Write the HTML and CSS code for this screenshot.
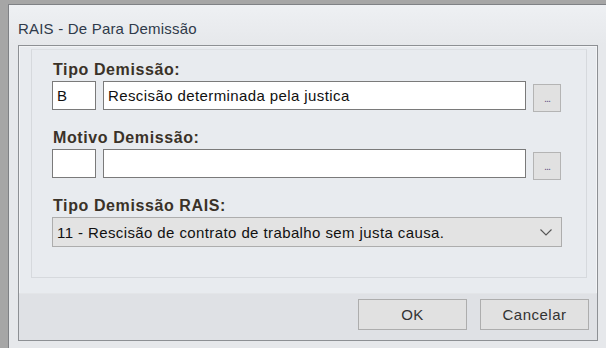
FILE: index.html
```html
<!DOCTYPE html>
<html lang="pt">
<head>
<meta charset="utf-8">
<title>RAIS - De Para Demissão</title>
<link rel="stylesheet" href="styles.css">
</head>
<body>
<div class="window">
  <div class="title">RAIS - De Para Demissão</div>
  <div class="panel">
    <div class="content">
      <div class="group">
        <div class="label">Tipo Demissão:</div>
        <div class="row">
          <div class="input code">B</div>
          <div class="input desc">Rescisão determinada pela justica</div>
          <div class="btn-dots">...</div>
        </div>
        <div class="label">Motivo Demissão:</div>
        <div class="row">
          <div class="input code"></div>
          <div class="input desc"></div>
          <div class="btn-dots">...</div>
        </div>
        <div class="label">Tipo Demissão RAIS:</div>
        <div class="select">
          <span>11 - Rescisão de contrato de trabalho sem justa causa.</span>
          <svg class="chev" width="12" height="7" viewBox="0 0 12 7"><path d="M0.5 0.5 L6 6 L11.5 0.5" fill="none" stroke="#555" stroke-width="1.1"/></svg>
        </div>
      </div>
    </div>
    <div class="footer">
      <div class="btn">OK</div>
      <div class="btn">Cancelar</div>
    </div>
  </div>
</div>
</body>
</html>
```

FILE: styles.css
```css
html, body {
  margin: 0;
  padding: 0;
}
body {
  background: #a6a6a6;
  width: 606px;
  height: 348px;
  overflow: hidden;
  font-family: "Liberation Sans", Arial, sans-serif;
}
.window {
  margin: 4px 0 0 8px;
  height: 344px;
  border-top: 1px solid #7f8185;
  border-left: 1px solid #7f8185;
  background: linear-gradient(#eef0f3, #e6e8eb 40px, #e6e8eb);
  box-sizing: border-box;
  padding: 0 8px 0 9px;
  display: flex;
  flex-direction: column;
}
.title {
  height: 40px;
  font-size: 15px;
  letter-spacing: 0.2px;
  line-height: 14px;
  padding-top: 17px;
  box-sizing: border-box;
  color: #2f3a4a;
}
.panel {
  border: 1px solid #8d9094;
  box-shadow: inset 0 0 0 1px #f3f4f6;
  height: 296px;
  box-sizing: border-box;
  display: flex;
  flex-direction: column;
  background: #e8ebef;
}
.content {
  padding: 3px 10px 0 12px;
  height: 247px;
  box-sizing: border-box;
}
.group {
  border: 1px solid #d6d9dd;
  border-top-color: #dcdfe3;
  height: 229px;
  box-sizing: border-box;
  padding: 11px 23px 0 20px;
}
.label {
  font-weight: bold;
  font-size: 16px;
  letter-spacing: 0.6px;
  line-height: 18px;
  color: #3a3228;
  padding-left: 1px;
  height: 18px;
  margin-bottom: 2px;
}
.row {
  display: flex;
  align-items: flex-start;
  gap: 7px;
  height: 48px;
}
.input {
  height: 29px;
  box-sizing: border-box;
  border: 1px solid #7a7a7a;
  box-shadow: inset 0 0 0 1px #ffffff;
  background: #fff;
  font-size: 15px;
  letter-spacing: 0.4px;
  line-height: 26px;
  padding: 1px 0 0 4px;
  color: #111;
}
.code {
  width: 44px;
}
.desc {
  width: 423px;
}
.btn-dots {
  margin-top: 3px;
  width: 28px;
  height: 28px;
  box-sizing: border-box;
  border: 1px solid #b4b4b4;
  background: #e1e1e1;
  color: #6a5a8a;
  font-size: 11px;
  line-height: 26px;
  text-align: center;
  letter-spacing: -1px;
}
.select {
  width: 510px;
  height: 30px;
  box-sizing: border-box;
  border: 1px solid #adadad;
  background: #e3e3e3;
  display: flex;
  align-items: center;
  justify-content: space-between;
  padding: 1px 9px 0 4px;
  font-size: 15px;
  letter-spacing: 0.4px;
  color: #111;
}
.chev {
  display: block;
}
.footer {
  flex: 1;
  background: #dfe1e5;
  border-top: 1px solid #e3e5e8;
  display: flex;
  justify-content: flex-end;
  align-items: flex-start;
  gap: 13px;
  padding: 5px 8px 0 0;
}
.btn {
  width: 109px;
  height: 31px;
  box-sizing: border-box;
  border: 1px solid #adadad;
  background: #e1e1e1;
  font-size: 15px;
  letter-spacing: 0.5px;
  line-height: 29px;
  text-align: center;
  color: #333;
}
```
